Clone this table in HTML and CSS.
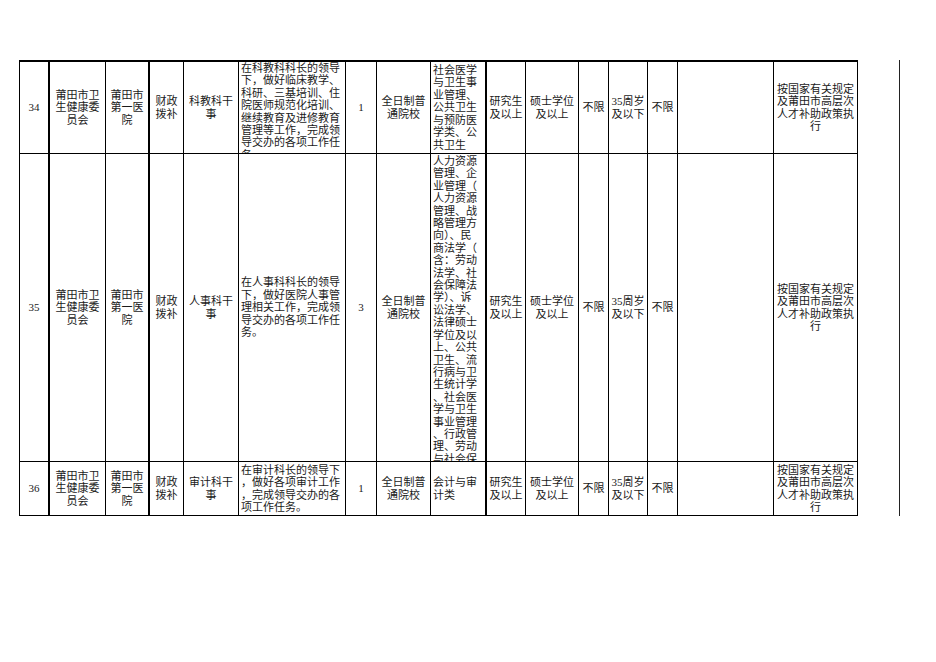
FILE: index.html
```html
<!DOCTYPE html>
<html lang="zh-CN">
<head>
<meta charset="utf-8">
<title>岗位表</title>
<link rel="stylesheet" href="styles.css">
</head>
<body>
<div class="page">
  <div class="sheet">
    <!-- row 34 -->
    <div class="c thick">34</div>
    <div class="c">莆田市卫<br>生健康委<br>员会</div>
    <div class="c thick">莆田市<br>第一医<br>院</div>
    <div class="c">财政<br>拨补</div>
    <div class="c">科教科干<br>事</div>
    <div class="c left">在科教科科长的领导<br>下，做好临床教学、<br>科研、三基培训、住<br>院医师规范化培训、<br>继续教育及进修教育<br>管理等工作，完成领<br>导交办的各项工作任<br>务。</div>
    <div class="c">1</div>
    <div class="c">全日制普<br>通院校</div>
    <div class="c left thick">社会医学<br>与卫生事<br>业管理、<br>公共卫生<br>与预防医<br>学类、公<br>共卫生</div>
    <div class="c">研究生<br>及以上</div>
    <div class="c">硕士学位<br>及以上</div>
    <div class="c">不限</div>
    <div class="c">35周岁<br>及以下</div>
    <div class="c">不限</div>
    <div class="c"></div>
    <div class="c">按国家有关规定<br>及莆田市高层次<br>人才补助政策执<br>行</div>

    <!-- row 35 -->
    <div class="c thick">35</div>
    <div class="c">莆田市卫<br>生健康委<br>员会</div>
    <div class="c thick">莆田市<br>第一医<br>院</div>
    <div class="c">财政<br>拨补</div>
    <div class="c">人事科干<br>事</div>
    <div class="c left">在人事科科长的领导<br>下，做好医院人事管<br>理相关工作，完成领<br>导交办的各项工作任<br>务。</div>
    <div class="c">3</div>
    <div class="c">全日制普<br>通院校</div>
    <div class="c left thick long">人力资源<br>管理、企<br>业管理（<br>人力资源<br>管理、战<br>略管理方<br>向）、民<br>商法学（<br>含：劳动<br>法学、社<br>会保障法<br>学）、诉<br>讼法学、<br>法律硕士<br>学位及以<br>上、公共<br>卫生、流<br>行病与卫<br>生统计学<br>、社会医<br>学与卫生<br>事业管理<br>、行政管<br>理、劳动<br>与社会保</div>
    <div class="c">研究生<br>及以上</div>
    <div class="c">硕士学位<br>及以上</div>
    <div class="c">不限</div>
    <div class="c">35周岁<br>及以下</div>
    <div class="c">不限</div>
    <div class="c"></div>
    <div class="c">按国家有关规定<br>及莆田市高层次<br>人才补助政策执<br>行</div>

    <!-- row 36 -->
    <div class="c thick">36</div>
    <div class="c">莆田市卫<br>生健康委<br>员会</div>
    <div class="c thick">莆田市<br>第一医<br>院</div>
    <div class="c">财政<br>拨补</div>
    <div class="c">审计科干<br>事</div>
    <div class="c left">在审计科长的领导下<br>，做好各项审计工作<br>，完成领导交办的各<br>项工作任务。</div>
    <div class="c">1</div>
    <div class="c">全日制普<br>通院校</div>
    <div class="c left thick">会计与审<br>计类</div>
    <div class="c">研究生<br>及以上</div>
    <div class="c">硕士学位<br>及以上</div>
    <div class="c">不限</div>
    <div class="c">35周岁<br>及以下</div>
    <div class="c">不限</div>
    <div class="c"></div>
    <div class="c">按国家有关规定<br>及莆田市高层次<br>人才补助政策执<br>行</div>
  </div>
  <div class="edge"></div>
</div>
</body>
</html>
```

FILE: styles.css
```css
html, body {
  margin: 0;
  padding: 0;
  background: #ffffff;
}

.page {
  display: flex;
  align-items: flex-start;
  padding-top: 60px;
  padding-left: 19px;
}

.sheet {
  display: grid;
  grid-template-columns: 30px 56px 44px 34px 55px 107px 31px 54px 56px 39px 53px 30px 39px 30px 96px 84px;
  grid-template-rows: 92px 308px 54px;
  border-top: 2px solid #000;
  border-left: 1px solid #000;
  font-family: "Liberation Serif", "Noto Sans CJK SC", serif;
  font-size: 11px;
  line-height: 12.4px;
  color: #1a1a1a;
}

.c {
  box-sizing: border-box;
  border-right: 1px solid #000;
  border-bottom: 1px solid #000;
  overflow: hidden;
  display: flex;
  flex-direction: column;
  justify-content: safe center;
  text-align: center;
  white-space: nowrap;
  padding: 0 1px;
}

.c.thick {
  border-right-width: 2px;
}

.c.left {
  text-align: left;
  padding-left: 2px;
}

.c.long {
  justify-content: flex-start;
  padding-top: 1px;
}

.edge {
  width: 1px;
  height: 456px;
  margin-left: 41px;
  background: #222;
}
```
